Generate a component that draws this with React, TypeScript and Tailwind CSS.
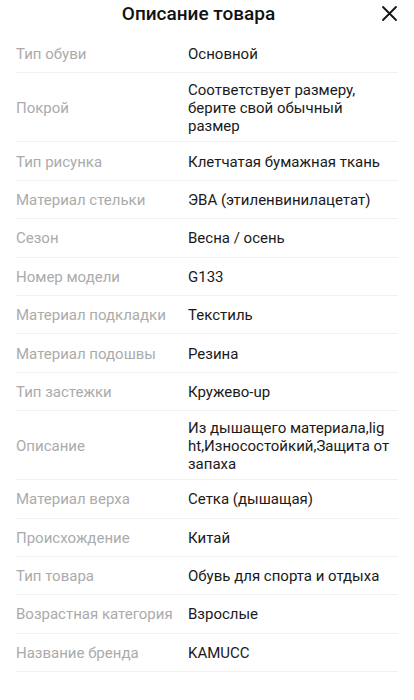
const rows: { label: string; value: string[] }[] = [
  { label: 'Тип обуви', value: ['Основной'] },
  { label: 'Покрой', value: ['Соответствует размеру,', 'берите свой обычный', 'размер'] },
  { label: 'Тип рисунка', value: ['Клетчатая бумажная ткань'] },
  { label: 'Материал стельки', value: ['ЭВА (этиленвинилацетат)'] },
  { label: 'Сезон', value: ['Весна / осень'] },
  { label: 'Номер модели', value: ['G133'] },
  { label: 'Материал подкладки', value: ['Текстиль'] },
  { label: 'Материал подошвы', value: ['Резина'] },
  { label: 'Тип застежки', value: ['Кружево-up'] },
  { label: 'Описание', value: ['Из дышащего материала,lig', 'ht,Износостойкий,Защита от', 'запаха'] },
  { label: 'Материал верха', value: ['Сетка (дышащая)'] },
  { label: 'Происхождение', value: ['Китай'] },
  { label: 'Тип товара', value: ['Обувь для спорта и отдыха'] },
  { label: 'Возрастная категория', value: ['Взрослые'] },
  { label: 'Название бренда', value: ['KAMUCC'] },
];

export default function App() {
  return (
    <div className="w-[414px] min-h-[700px] bg-white font-['Roboto','Liberation_Sans',sans-serif]">
      <header className="flex items-center h-[27px] px-4 mb-[8px]">
        <h1 className="flex-1 text-center text-[19px] leading-[26px] font-medium text-[#111]">
          Описание товара
        </h1>
        <button className="w-[17px] h-[17px] flex items-center justify-center text-[#111]">
          <svg width="17" height="17" viewBox="0 0 17 17" fill="none" stroke="currentColor" strokeWidth="1.8" strokeLinecap="round">
            <path d="M2 2L15 15M15 2L2 15" />
          </svg>
        </button>
      </header>

      <div className="px-4">
        {rows.map((row) => (
          <div
            key={row.label}
            className="flex items-center min-h-[38.4px] pt-[7.5px] pb-[6.5px] border-b border-[#f1f1f1] text-[15px] leading-[18px]"
          >
            <div className="w-[172px] shrink-0 text-[#ababab]">{row.label}</div>
            <div className="flex-1 text-[#1a1a1a]">
              {row.value.map((line, i) => (
                <div key={i} className="whitespace-nowrap">
                  {line}
                </div>
              ))}
            </div>
          </div>
        ))}
      </div>
    </div>
  );
}
